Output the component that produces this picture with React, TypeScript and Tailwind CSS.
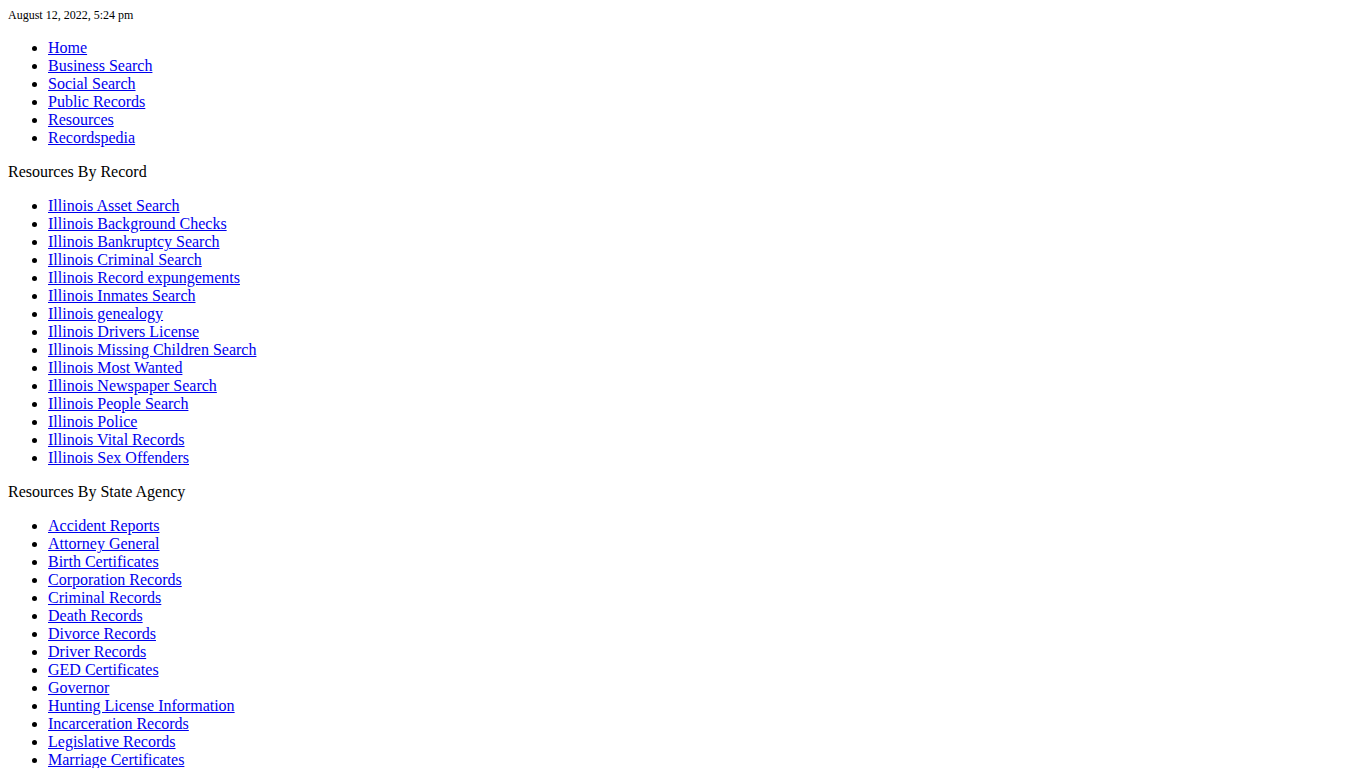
const nav = ['Home', 'Business Search', 'Social Search', 'Public Records', 'Resources', 'Recordspedia']

const byRecord = [
  'Illinois Asset Search',
  'Illinois Background Checks',
  'Illinois Bankruptcy Search',
  'Illinois Criminal Search',
  'Illinois Record expungements',
  'Illinois Inmates Search',
  'Illinois genealogy',
  'Illinois Drivers License',
  'Illinois Missing Children Search',
  'Illinois Most Wanted',
  'Illinois Newspaper Search',
  'Illinois People Search',
  'Illinois Police',
  'Illinois Vital Records',
  'Illinois Sex Offenders',
]

const byAgency = [
  'Accident Reports',
  'Attorney General',
  'Birth Certificates',
  'Corporation Records',
  'Criminal Records',
  'Death Records',
  'Divorce Records',
  'Driver Records',
  'GED Certificates',
  'Governor',
  'Hunting License Information',
  'Incarceration Records',
  'Legislative Records',
  'Marriage Certificates',
  'Medical License Records',
  'Motor Vehicle Records',
]

function LinkList({ items }: { items: string[] }) {
  return (
    <ul className="list-disc pl-10 my-4">
      {items.map((item) => (
        <li key={item}>
          <a href="#" className="text-[#0000ee] underline">
            {item}
          </a>
        </li>
      ))}
    </ul>
  )
}

export default function App() {
  return (
    <div className="m-2 bg-white text-black text-base leading-[18px] font-['Liberation_Serif','Times_New_Roman',serif]">
      <div className="text-xs leading-[15px]">August 12, 2022, 5:24 pm</div>
      <LinkList items={nav} />
      <div>Resources By Record</div>
      <LinkList items={byRecord} />
      <div>Resources By State Agency</div>
      <LinkList items={byAgency} />
    </div>
  )
}
